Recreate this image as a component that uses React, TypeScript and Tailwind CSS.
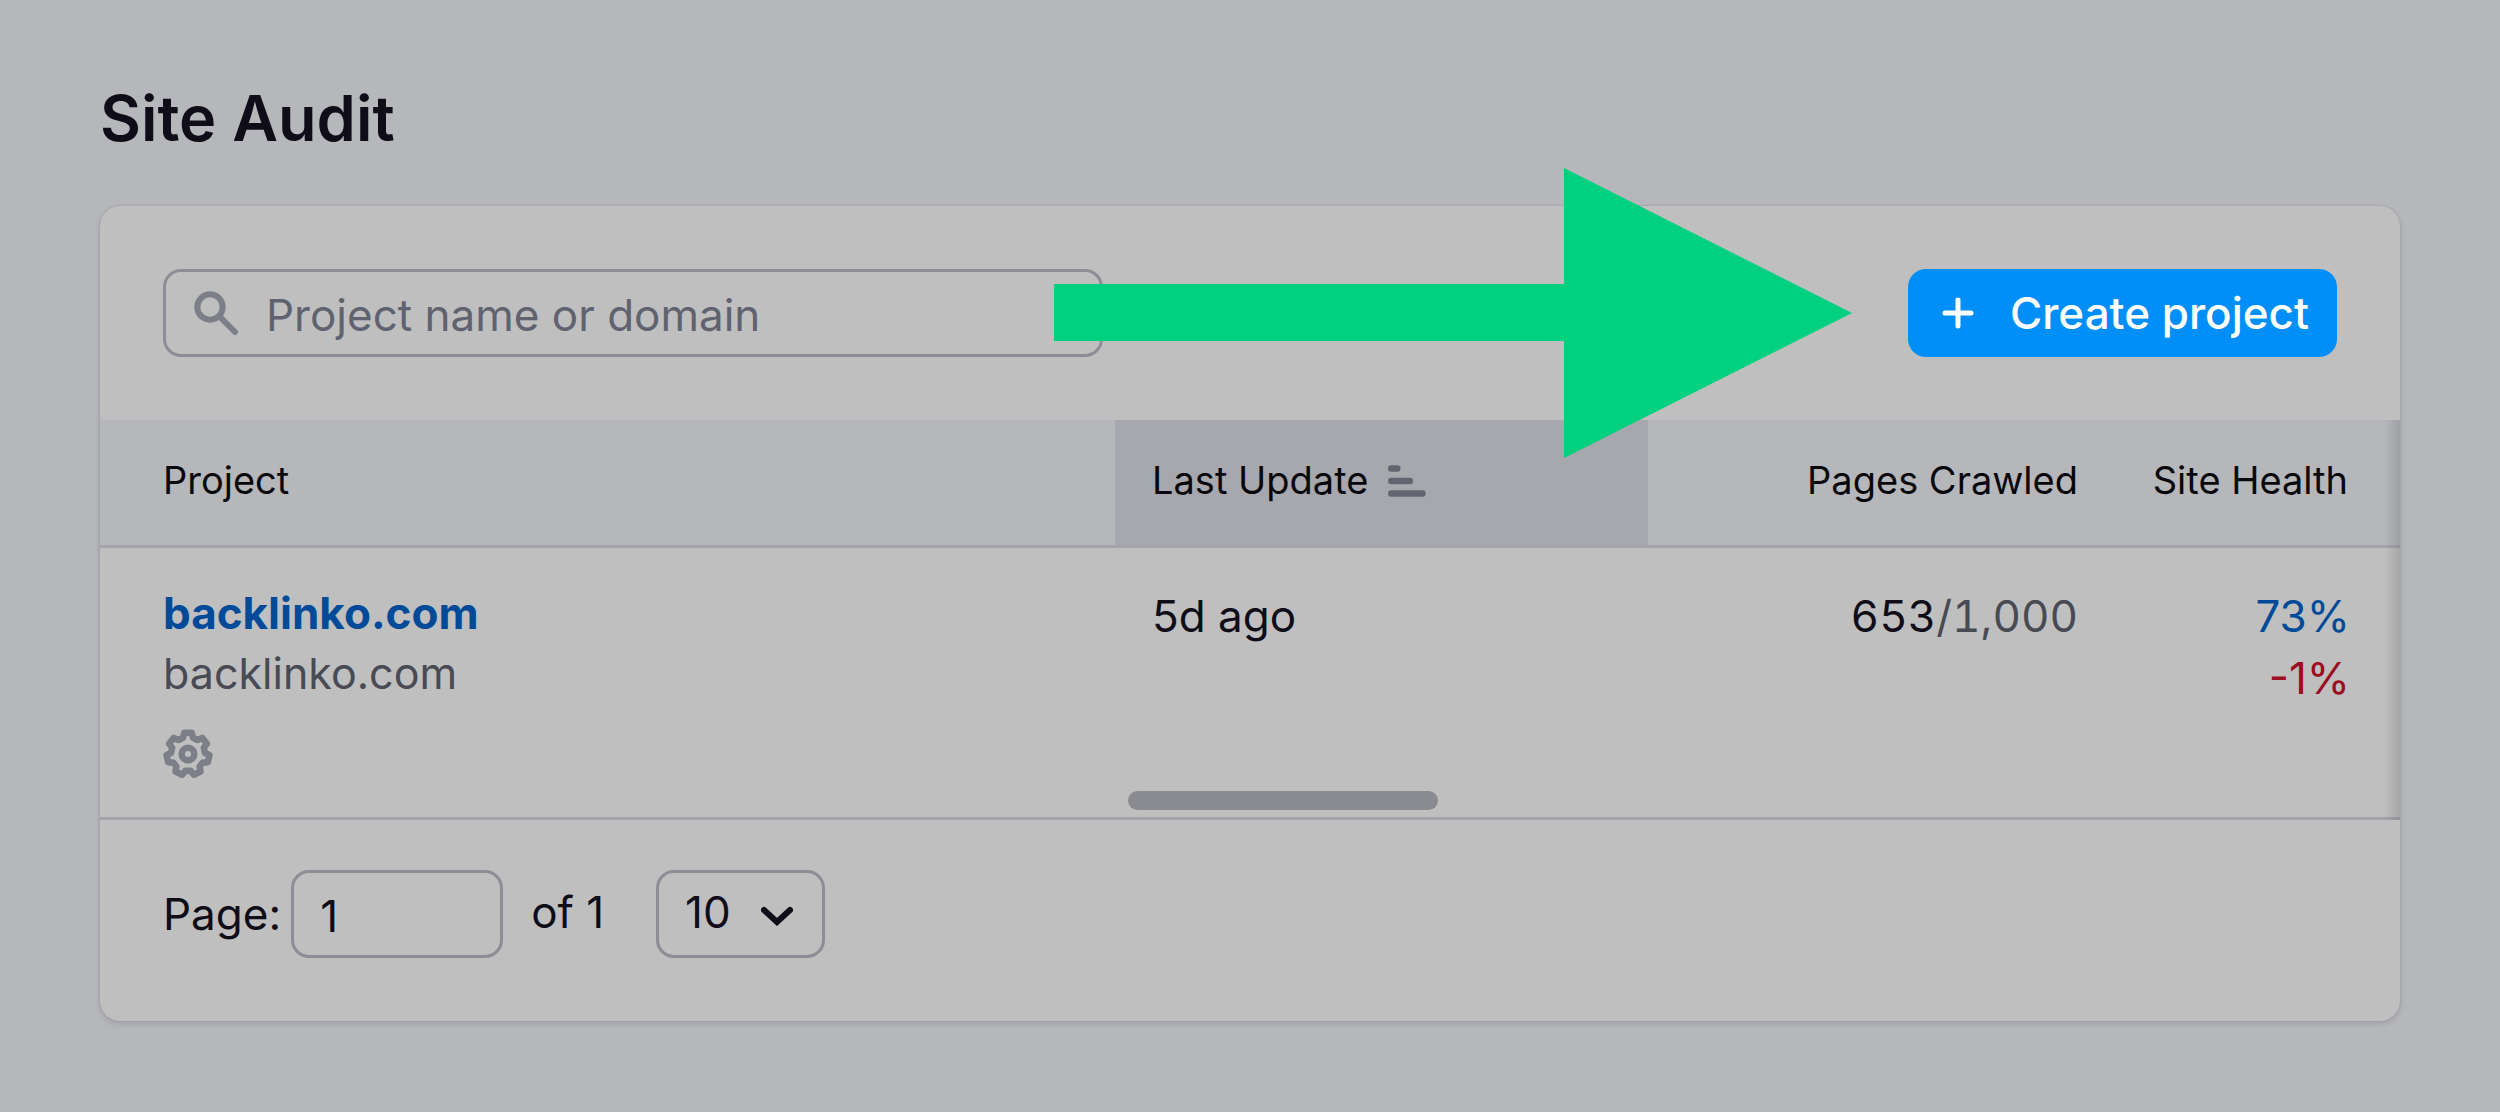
import React from 'react';

interface Project {
  name: string;
  domain: string;
  updated: string;
  crawled: string;
  limit: string;
  health: string;
  change: string;
}

const projects: Project[] = [
  {
    name: 'backlinko.com',
    domain: 'backlinko.com',
    updated: '5d ago',
    crawled: '653',
    limit: '1,000',
    health: '73%',
    change: '-1%',
  },
];

const SearchIcon = () => (
  <svg viewBox="0 0 48 48" className="h-12 w-12 shrink-0" fill="none" stroke="#7d7f88" strokeLinecap="round">
    <circle cx="16" cy="18" r="12.7" strokeWidth="6" />
    <path d="M26 28l15 15" strokeWidth="6" />
  </svg>
);

const PlusIcon = () => (
  <svg viewBox="0 0 32 32" className="h-8 w-8" fill="none" stroke="currentColor" strokeWidth="5" strokeLinecap="round">
    <path d="M16 3v26M3 16h26" />
  </svg>
);

const SortIcon = () => (
  <svg viewBox="0 0 38 32" className="h-8 w-[38px]" fill="none" stroke="#62646f" strokeWidth="6.5" strokeLinecap="round">
    <path d="M3.3 3.5h6M3.3 16h18.5M3.3 28.5h31.2" />
  </svg>
);

// seven teeth, four outline points for each
const gearPoints = Array.from({ length: 7 })
  .flatMap((_, tooth) =>
    [
      [-17, 17],
      [-10, 21.5],
      [10, 21.5],
      [17, 17],
    ].map(([offset, radius]) => {
      const angle = ((tooth * 360) / 7 + offset) * (Math.PI / 180);
      return `${(radius * Math.sin(angle)).toFixed(2)},${(-radius * Math.cos(angle)).toFixed(2)}`;
    })
  )
  .join(' ');

const GearIcon = () => (
  <svg viewBox="-25 -25 50 50" className="h-[50px] w-[50px]" fill="none" stroke="#7d7f88" strokeWidth="6.5" strokeLinejoin="round">
    <polygon points={gearPoints} />
    <circle r="6.3" />
  </svg>
);

const ChevronIcon = () => (
  <svg viewBox="0 0 32 24" className="h-6 w-8" fill="none" stroke="#0e0d18" strokeWidth="6" strokeLinecap="round">
    <path d="M3 8l13 12L29 8" />
  </svg>
);

export default function App() {
  return (
    <div className="relative min-h-screen bg-[#b6b7bb] px-[100px] pt-[83px] pb-[90px] font-['Inter',sans-serif] text-[#0e0d18]">
      <h1 className="mb-[53px] text-[63px] leading-[70px] font-semibold">Site Audit</h1>

      <main className="overflow-hidden rounded-[20px] bg-[#bfbfbf] shadow-[0_0_2px_rgba(25,27,35,0.2),0_3px_6px_rgba(25,27,35,0.12)]">
        <div className="flex items-center justify-between px-[63px] py-[63px]">
          <label className="flex h-[88px] w-[940px] items-center gap-6 rounded-[18px] border-3 border-[#8c8d95] pl-7">
            <SearchIcon />
            <input
              type="search"
              aria-label="Project name or domain"
              placeholder="Project name or domain"
              className="w-full bg-transparent pt-1 text-[44px] outline-none placeholder:text-[#606270]"
            />
          </label>
          <button className="flex h-[88px] items-center gap-9 rounded-[18px] bg-[#008ff8] pr-7 pl-[34px] text-[44px] font-medium text-white">
            <PlusIcon />
            Create project
          </button>
        </div>

        <div className="relative">
          <table className="w-full table-fixed border-separate border-spacing-0">
            <colgroup>
              <col />
              <col className="w-[533px]" />
              <col className="w-[468px]" />
              <col className="w-[284px]" />
            </colgroup>
            <thead>
              <tr className="h-32 bg-[#b6b7bb] text-left text-[38px] text-[#08080c]">
                <th className="border-b-3 border-[#a4a5ab] pb-1 pl-[63px] font-normal">Project</th>
                <th className="border-b-3 border-[#a4a5ab] bg-[#a7a8ad] pb-1 pl-[37px] font-normal">
                  <span className="flex items-center gap-5">
                    Last Update
                    <SortIcon />
                  </span>
                </th>
                <th className="border-b-3 border-[#a4a5ab] pr-[38px] pb-1 text-right font-normal">Pages Crawled</th>
                <th className="border-b-3 border-[#a4a5ab] pr-[52px] pb-1 text-right font-normal">Site Health</th>
              </tr>
            </thead>
            <tbody>
              {projects.map((project) => (
                <tr key={project.name} className="h-[272px] align-top text-[44px]">
                  <td className="border-b-3 border-[#a4a5ab] pt-[35px] pl-[63px] leading-[60px]">
                    <a href="#" className="block font-bold text-[#004b99]">
                      {project.name}
                    </a>
                    <div className="text-[43px] text-[#484a54]">{project.domain}</div>
                    <button aria-label="Project settings" className="mt-[26px] block">
                      <GearIcon />
                    </button>
                  </td>
                  <td className="border-b-3 border-[#a4a5ab] pt-[38px] pl-[37px] leading-[60px]">{project.updated}</td>
                  <td className="border-b-3 border-[#a4a5ab] pt-[38px] pr-[38px] text-right leading-[60px] tabular-nums">
                    {project.crawled}
                    <span className="text-[#484a54]">/{project.limit}</span>
                  </td>
                  <td className="border-b-3 border-[#a4a5ab] pt-[37px] pr-[50px] text-right leading-[62px]">
                    <a href="#" className="block text-[#004b99]">
                      {project.health}
                    </a>
                    <div className="text-[#9c0c22]">{project.change}</div>
                  </td>
                </tr>
              ))}
            </tbody>
          </table>
          {/* scroll hint and scroll thumb over the table */}
          <div className="absolute inset-y-0 right-0 w-4 bg-linear-to-l from-[#191b23]/15 to-transparent" />
          <div className="absolute bottom-[10px] left-[1028px] h-[19px] w-[310px] rounded-full bg-[#8a8b91]" />
        </div>

        <div className="flex items-center px-[63px] pt-[50px] pb-[63px] text-[44px]">
          <label htmlFor="page">Page:</label>
          <input
            id="page"
            defaultValue="1"
            className="ml-[10px] h-[88px] w-[212px] rounded-[18px] border-3 border-[#8c8d95] bg-transparent px-[26px] pt-1"
          />
          <span className="ml-7 pb-1">of 1</span>
          <div className="relative ml-[52px]">
            <select
              aria-label="Rows per page"
              className="block h-[88px] w-[169px] appearance-none rounded-[18px] border-3 border-[#8c8d95] bg-transparent pb-1 pl-[26px]"
            >
              <option>10</option>
            </select>
            <div className="pointer-events-none absolute inset-y-0 right-8 flex items-center">
              <ChevronIcon />
            </div>
          </div>
        </div>
      </main>

      {/* callout arrow pointing at the button */}
      <svg viewBox="0 0 798 290" className="pointer-events-none absolute top-[168px] left-[1054px] h-[290px] w-[798px]" fill="#00d17f">
        <path d="M0 116h510V0l288 145-288 145V173H0z" />
      </svg>
    </div>
  );
}
